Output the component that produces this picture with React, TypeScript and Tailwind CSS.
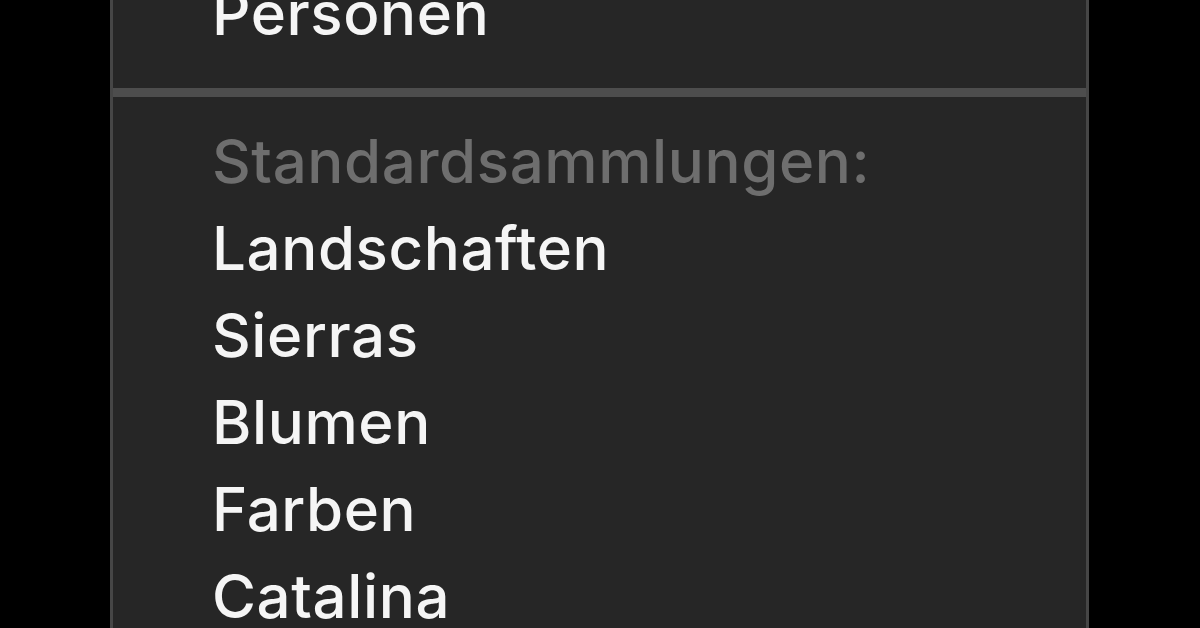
export default function App() {
  const items = ["Landschaften", "Sierras", "Blumen", "Farben", "Catalina"];
  const row = "h-[87px] leading-[87px] text-[60px] pl-[99px] font-medium tracking-[0.6px] whitespace-nowrap";
  return (
    <div className="h-[628px] w-[1200px] bg-black overflow-hidden pl-[110px] pr-[111px]" style={{ fontFamily: "Inter, 'Noto Sans', sans-serif" }}>
      <div className="h-full bg-[#262626] border-x-[3px] border-[#464646] flex flex-col overflow-hidden">
        <div className="-mt-[30px] flex flex-col">
          <div className={`${row} text-[#f5f5f5]`}>Personen</div>
          <div className="mt-[31px] h-[9px] bg-[#4d4d4d]" />
          <div className={`${row} mt-[21px] text-[#6e6e6e]`}>Standardsammlungen:</div>
          {items.map((t) => (
            <div key={t} className={`${row} text-[#f5f5f5]`}>{t}</div>
          ))}
        </div>
      </div>
    </div>
  );
}
